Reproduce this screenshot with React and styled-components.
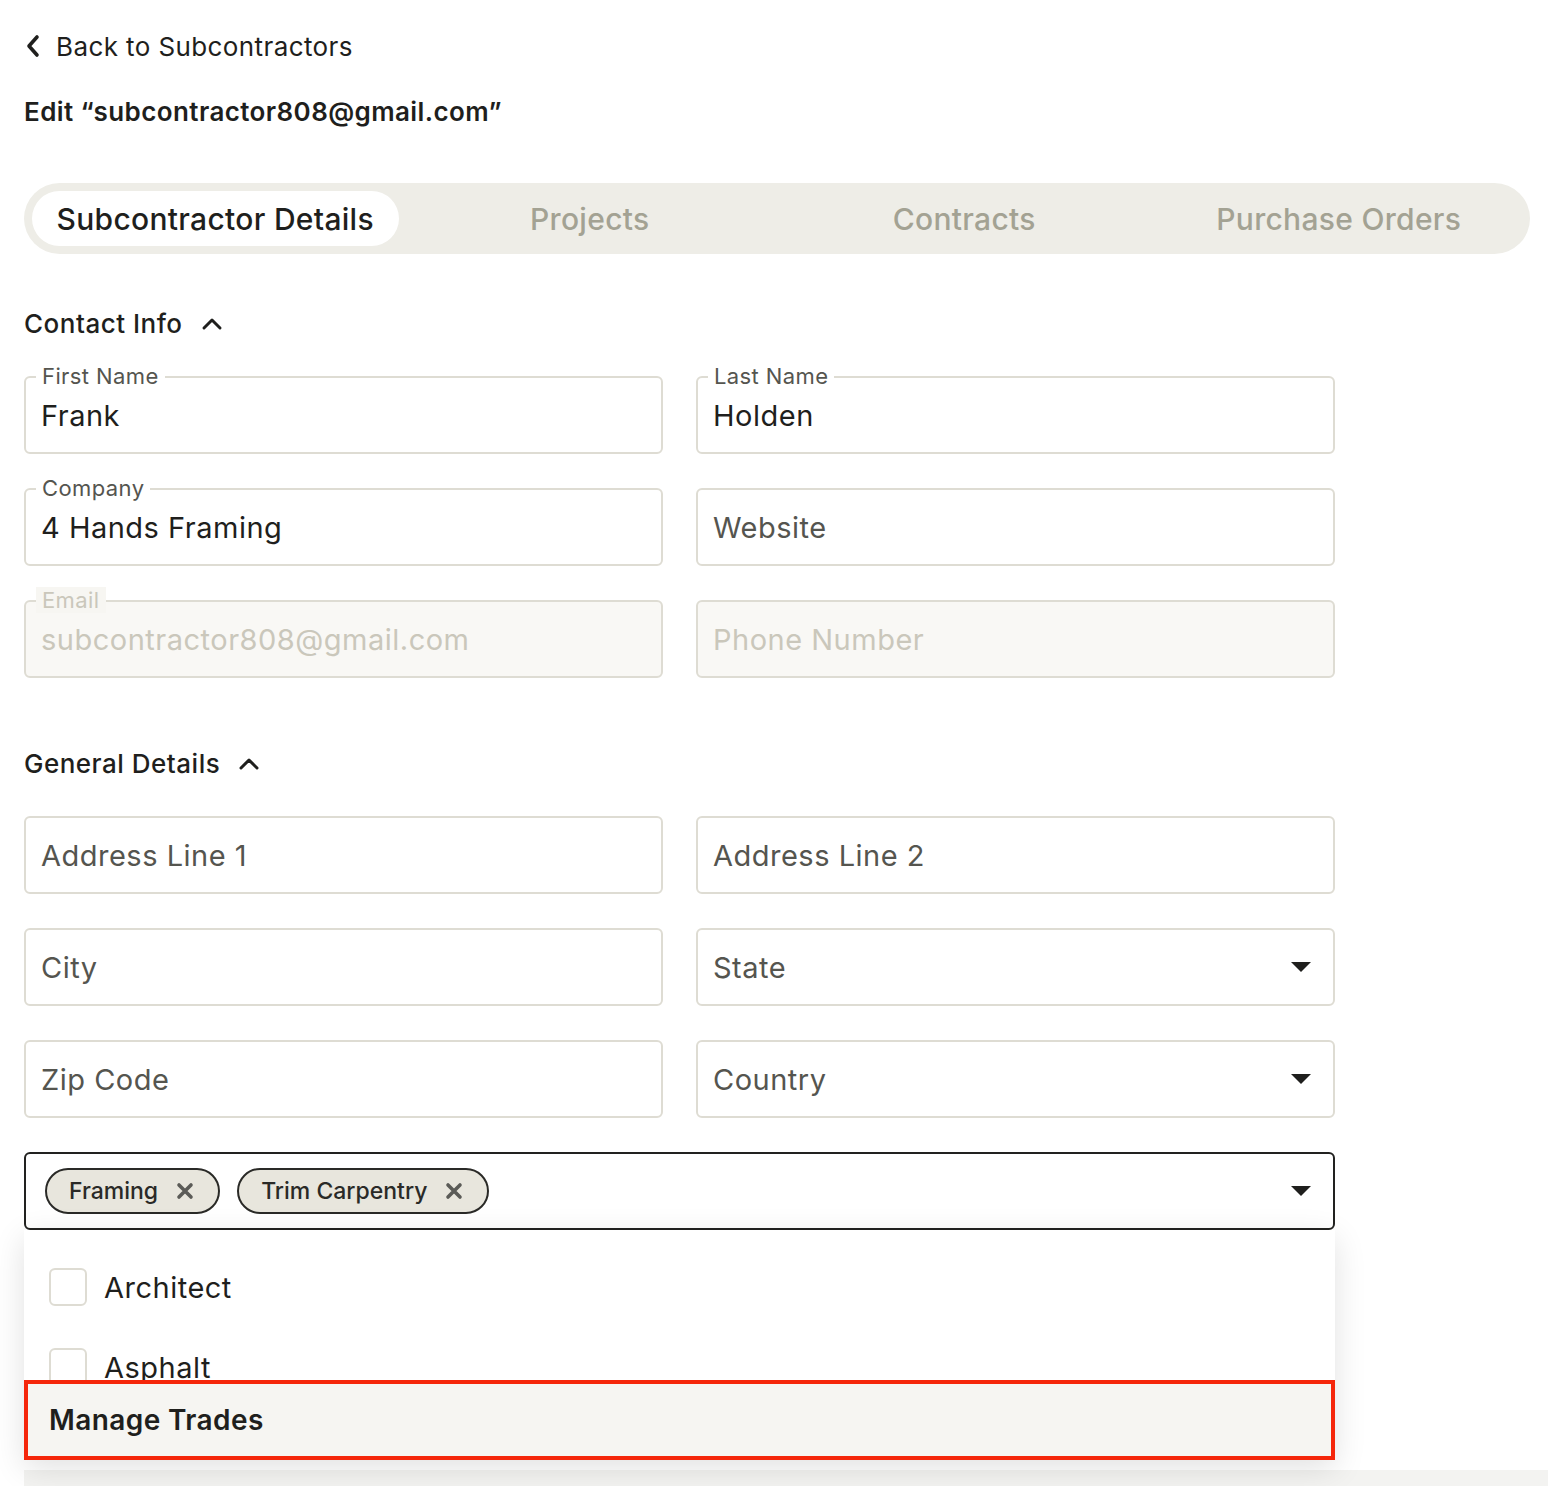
import styled, { createGlobalStyle } from "styled-components";

const GlobalStyle = createGlobalStyle`
    body {
        margin: 0;
        background: #ffffff;
        font-family: Inter, "Noto Sans", sans-serif;
        color: #1f1f1d;
    }
    * {
        box-sizing: border-box;
    }
`;

const tabs = ["Subcontractor Details", "Projects", "Contracts", "Purchase Orders"];

const contactFields = [
    { label: "First Name", value: "Frank" },
    { label: "Last Name", value: "Holden" },
    { label: "Company", value: "4 Hands Framing" },
    { placeholder: "Website" },
    { label: "Email", value: "subcontractor808@gmail.com", disabled: true },
    { placeholder: "Phone Number", disabled: true },
];

const generalFields = [
    { placeholder: "Address Line 1" },
    { placeholder: "Address Line 2" },
    { placeholder: "City" },
    { placeholder: "State", select: true },
    { placeholder: "Zip Code" },
    { placeholder: "Country", select: true },
];

const trades = ["Framing", "Trim Carpentry"];
const options = ["Architect", "Asphalt"];

export default function App() {
    return (
        <>
            <GlobalStyle />
            <Page>
                <BackLink href="#">
                    <ChevronLeft />
                    Back to Subcontractors
                </BackLink>
                <Title>Edit “subcontractor808@gmail.com”</Title>

                <TabBar>
                    {tabs.map((tab, index) => (
                        <Tab key={tab} $active={index === 0}>
                            {tab}
                        </Tab>
                    ))}
                </TabBar>

                <SectionHeader $top={48}>
                    Contact Info <ChevronUp />
                </SectionHeader>
                <FieldGrid>
                    {contactFields.map((f, index) => (
                        <Field key={index} {...f} />
                    ))}
                </FieldGrid>

                <SectionHeader $top={64}>
                    General Details <ChevronUp />
                </SectionHeader>
                <FieldGrid>
                    {generalFields.map((f, index) => (
                        <Field key={index} {...f} />
                    ))}
                </FieldGrid>

                <TradeWrap>
                    <TradeSelect>
                        {trades.map((t) => (
                            <Chip key={t}>
                                {t}
                                <CloseIcon />
                            </Chip>
                        ))}
                        <Caret />
                    </TradeSelect>
                    <Menu>
                        <OptionList>
                            {options.map((o) => (
                                <Option key={o}>
                                    <CheckBox />
                                    {o}
                                </Option>
                            ))}
                        </OptionList>
                        <ManageTrades>Manage Trades</ManageTrades>
                    </Menu>
                </TradeWrap>

                <BottomStrip />
            </Page>
        </>
    );
}

function Field({ label, value, placeholder, disabled, select }) {
    return (
        <FieldBox $disabled={disabled}>
            {label && <FieldLabel $disabled={disabled}>{label}</FieldLabel>}
            {value ? (
                <FieldValue $disabled={disabled}>{value}</FieldValue>
            ) : (
                <Placeholder $disabled={disabled}>{placeholder}</Placeholder>
            )}
            {select && <Caret />}
        </FieldBox>
    );
}

function ChevronLeft() {
    return (
        <svg width="18" height="24" viewBox="0 0 18 24">
            <path
                d="M13 3 L5 12 L13 21"
                fill="none"
                stroke="#1f1f1d"
                strokeWidth="3.6"
                strokeLinecap="round"
                strokeLinejoin="round"
            />
        </svg>
    );
}

function ChevronUp() {
    return (
        <svg width="22" height="14" viewBox="0 0 22 14">
            <path
                d="M3 11 L11 3 L19 11"
                fill="none"
                stroke="#1f1f1d"
                strokeWidth="3"
                strokeLinecap="round"
                strokeLinejoin="round"
            />
        </svg>
    );
}

function CloseIcon() {
    return (
        <svg width="18" height="18" viewBox="0 0 18 18">
            <path
                d="M3 3 L15 15 M15 3 L3 15"
                stroke="#5b5b57"
                strokeWidth="3.6"
                strokeLinecap="round"
            />
        </svg>
    );
}

function Caret() {
    return (
        <CaretIcon width="20" height="12" viewBox="0 0 20 12">
            <path d="M0 1 L20 1 L10 11 Z" fill="#1f1f1d" />
        </CaretIcon>
    );
}

const Page = styled.div`
    padding: 22px 18px 0 24px;
`;

const BackLink = styled.a`
    display: flex;
    align-items: center;
    gap: 14px;
    height: 48px;
    font-size: 26px;
    letter-spacing: 0.4px;
    color: #1f1f1d;
    text-decoration: none;
`;

const Title = styled.h1`
    margin: 20px 0 0;
    font-size: 26px;
    font-weight: 600;
    line-height: 44px;
    letter-spacing: 0.4px;
`;

const TabBar = styled.div`
    display: grid;
    grid-template-columns: repeat(4, 1fr);
    gap: 8px;
    margin-top: 49px;
    padding: 8px;
    height: 71px;
    background: #eeede7;
    border-radius: 36px;
`;

const Tab = styled.div`
    display: flex;
    align-items: center;
    justify-content: center;
    border-radius: 28px;
    font-size: 30px;
    font-weight: 500;
    letter-spacing: 0.3px;
    color: ${(p) => (p.$active ? "#1f1f1d" : "#a3a293")};
    background: ${(p) => (p.$active ? "#ffffff" : "transparent")};
`;

const SectionHeader = styled.h2`
    display: flex;
    align-items: center;
    gap: 18px;
    margin: ${(p) => p.$top}px 0 30px;
    font-size: 26px;
    font-weight: 500;
    line-height: 44px;
    letter-spacing: 0.5px;
`;

const FieldGrid = styled.div`
    display: grid;
    grid-template-columns: 639px 639px;
    column-gap: 33px;
    row-gap: 34px;
`;

const FieldBox = styled.div`
    position: relative;
    display: flex;
    align-items: center;
    height: 78px;
    padding: 0 22px 0 15px;
    border: 2px solid #dedcd3;
    border-radius: 6px;
    background: ${(p) => (p.$disabled ? "#f9f8f5" : "#ffffff")};
`;

const FieldLabel = styled.span`
    position: absolute;
    top: -15px;
    left: 10px;
    padding: 0 6px;
    font-size: 22px;
    line-height: 26px;
    letter-spacing: 0.4px;
    color: ${(p) => (p.$disabled ? "#cac7bb" : "#55554f")};
    background: ${(p) => (p.$disabled ? "#f7f6f2" : "#ffffff")};
`;

const FieldValue = styled.span`
    font-size: 29px;
    letter-spacing: 0.5px;
    color: ${(p) => (p.$disabled ? "#cac7bb" : "#1f1f1d")};
`;

const Placeholder = styled.span`
    font-size: 29px;
    letter-spacing: 0.5px;
    color: ${(p) => (p.$disabled ? "#cac7bb" : "#55554f")};
`;

const CaretIcon = styled.svg`
    margin-left: auto;
`;

const TradeWrap = styled.div`
    position: relative;
    width: 1311px;
    margin-top: 34px;
`;

const TradeSelect = styled.div`
    display: flex;
    align-items: center;
    gap: 17px;
    height: 78px;
    padding: 0 22px 0 19px;
    border: 2px solid #222220;
    border-radius: 6px;
    background: #ffffff;
`;

const Chip = styled.div`
    display: flex;
    align-items: center;
    gap: 18px;
    height: 46px;
    padding: 0 24px 0 22px;
    border: 2px solid #2a2a27;
    border-radius: 23px;
    background: #e8e6dd;
    font-size: 23px;
    font-weight: 500;
    color: #2a2a27;
`;

const Menu = styled.div`
    position: absolute;
    top: 78px;
    left: 0;
    right: 0;
    z-index: 2;
    background: #ffffff;
    box-shadow: 0 8px 30px rgba(0, 0, 0, 0.12);
`;

const OptionList = styled.div`
    height: 150px;
    overflow: hidden;
    padding-top: 17px;
`;

const Option = styled.div`
    display: flex;
    align-items: center;
    gap: 17px;
    height: 80px;
    padding: 0 25px;
    font-size: 29px;
    letter-spacing: 0.5px;
    color: #1f1f1d;
`;

const CheckBox = styled.span`
    width: 38px;
    height: 38px;
    border: 2px solid #dedcd3;
    border-radius: 6px;
`;

const ManageTrades = styled.div`
    display: flex;
    align-items: center;
    height: 80px;
    padding: 0 21px;
    border: 4px solid #f5260b;
    background: #f6f5f2;
    font-size: 28px;
    font-weight: 600;
    letter-spacing: 0.4px;
    color: #1f1f1d;
`;

const BottomStrip = styled.div`
    height: 16px;
    margin: 240px -18px 0 0;
    background: #f3f3f1;
`;
